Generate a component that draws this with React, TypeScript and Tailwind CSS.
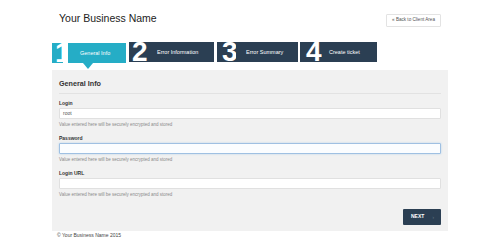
const steps = [
  { n: "2", label: "Error Information", gap: "ml-[3px]", numW: "w-[21px] pl-[3px]", labelW: "w-[64px] pl-[7px]" },
  { n: "3", label: "Error Summary", gap: "ml-[3px]", numW: "w-[19px] pl-[5px]", labelW: "w-[62px] pl-[10px]" },
  { n: "4", label: "Create ticket", gap: "ml-[2px]", numW: "w-[22px] pl-[6px]", labelW: "w-[55px] pl-[7px]" },
];

const fields = [
  { label: "Login", value: "root", focused: false },
  { label: "Password", value: "", focused: true },
  { label: "Login URL", value: "", focused: false },
];

export default function App() {
  return (
    <div className="w-[500px] h-[241px] overflow-hidden bg-white font-[family-name:Liberation_Sans,Arial,sans-serif] text-[#333]">
      <div className="ml-[52px] w-[396px]">
        {/* header */}
        <div className="flex h-[42px] items-start justify-between px-[7px]">
          <h1 className="mt-[12px] text-[10.5px] leading-[13px] text-[#222]">Your Business Name</h1>
          <button className="mt-[14px] flex h-[13px] w-[55px] items-center justify-center rounded-[1px] border border-[#e3e3e3] bg-white text-[4.6px] text-[#555]">
            « Back to Client Area
          </button>
        </div>

        {/* steps */}
        <div className="flex h-[28px] items-start">
          <div className="mt-[1px] flex h-[20px]">
            <div className="h-[20px] w-[11px] overflow-hidden bg-[#25adc6] pl-[3px] text-[28px] font-bold leading-[20px] text-white">
              1
            </div>
            <div className="relative ml-[5px] h-[20px] w-[58px] bg-[#25adc6] pl-[12px] text-[5.5px] leading-[20px] text-white">
              General Info
              <span className="absolute left-[15px] top-full border-x-[5px] border-t-[6px] border-x-transparent border-t-[#25adc6]" />
            </div>
          </div>
          {steps.map((s) => (
            <div key={s.n} className={`flex h-[20px] ${s.gap}`}>
              <div className={`h-[20px] overflow-hidden bg-[#2b3f53] text-[28px] font-bold leading-[20px] text-white ${s.numW}`}>
                {s.n}
              </div>
              <div className={`h-[20px] bg-[#2b3f53] text-[5.5px] leading-[20px] text-white ${s.labelW}`}>{s.label}</div>
            </div>
          ))}
        </div>

        {/* panel */}
        <div className="bg-[#f1f1f1] px-[7px] pb-[6px]">
          <div className="border-b border-[#e2e2e2] pb-[4px] pt-[9px] text-[7.2px] font-semibold leading-[10px] text-[#333]">
            General Info
          </div>
          <div className="pt-[6px]">
            {fields.map((f, i) => (
              <div key={f.label} className={i > 0 ? "mt-[7px]" : ""}>
                <div className="text-[5px] font-bold leading-[6px] text-[#333]">{f.label}</div>
                <div
                  className={`mt-[2px] flex h-[11px] items-center rounded-[1px] border pl-[3px] text-[5px] text-[#555] ${
                    f.focused
                      ? "border-[#9fc0e2] bg-[#fbfdff] shadow-[0_0_2px_rgba(102,175,233,0.45)]"
                      : "border-[#e0e0e0] bg-white"
                  }`}
                >
                  {f.value}
                </div>
                <div className="mt-[3px] text-[4.5px] leading-[6px] text-[#8a8a8a]">
                  Value entered here will be securely encrypted and stored
                </div>
              </div>
            ))}
          </div>
          <div className="mt-[11px] flex justify-end">
            <button className="flex h-[16px] w-[38px] items-center rounded-[1px] bg-[#2b3f53] pl-[8px] text-[5px] font-bold text-white">
              NEXT
              <span className="ml-[8px] text-[6px] font-normal text-[#5d6e80]">›</span>
            </button>
          </div>
        </div>

        {/* footer */}
        <div className="mt-[1px] pl-[5px] text-[5px] leading-[6px] text-[#444]">© Your Business Name 2015</div>
      </div>
    </div>
  );
}
